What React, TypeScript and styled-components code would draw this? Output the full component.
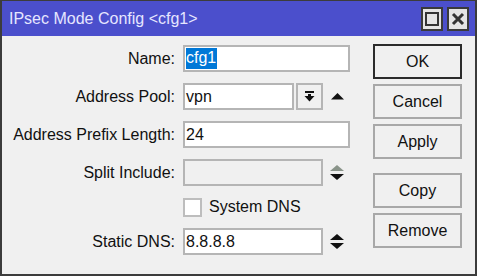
import React from "react";
import styled, { createGlobalStyle } from "styled-components";

const GlobalStyle = createGlobalStyle`
  html, body {
    margin: 0;
    padding: 0;
    background: #f0f0f0;
  }
  body {
    font-family: "Liberation Sans", Arial, sans-serif;
  }
`;

const Window = styled.div`
  box-sizing: border-box;
  width: 477px;
  height: 276px;
  display: flex;
  flex-direction: column;
  background: #f0f0f0;
  border: 2px solid #3c3c3c;
  border-top-width: 1px;
`;

const TitleBar = styled.div`
  height: 35px;
  display: flex;
  align-items: center;
  justify-content: space-between;
  padding: 0 6px 0 7px;
  background: #4b4fcc;
  color: #e6e6ff;
  font-size: 16px;
`;

const TitleButtons = styled.div`
  display: flex;
  gap: 4px;
`;

const TitleButton = styled.div`
  box-sizing: border-box;
  width: 22px;
  height: 24px;
  display: flex;
  align-items: center;
  justify-content: center;
  background: #e4e4e4;
  border: 2px solid #3a3a3a;
`;

const Body = styled.div`
  flex: 1;
  display: flex;
  justify-content: space-between;
  padding: 8px 13px 0 0;
`;

const Form = styled.div`
  display: flex;
  flex-direction: column;
  gap: 11px;
  padding-top: 1px;
`;

const Row = styled.div<{ $short?: boolean }>`
  display: flex;
  align-items: center;
  height: ${(p) => (p.$short ? "20px" : "27px")};
`;

const Label = styled.div`
  width: 173px;
  padding-right: 8px;
  text-align: right;
  font-size: 16px;
  color: #111;
  white-space: nowrap;
`;

const Field = styled.div<{ $width: number; $disabled?: boolean }>`
  box-sizing: border-box;
  width: ${(p) => p.$width}px;
  height: 27px;
  display: flex;
  align-items: center;
  padding-left: 1px;
  background: ${(p) => (p.$disabled ? "#f0f0f0" : "#ffffff")};
  border: 2px solid #b5b5b5;
  font-size: 16px;
  color: #111;
`;

const Selected = styled.span`
  background: #0078d7;
  color: #ffffff;
  padding: 1px 1px 2px 0;
`;

const DropButton = styled.div`
  box-sizing: border-box;
  width: 27px;
  height: 27px;
  margin-left: 2px;
  display: flex;
  align-items: center;
  justify-content: center;
  background: #f0f0f0;
  border: 2px solid #b5b5b5;
`;

const Arrows = styled.div`
  width: 14px;
  margin-left: 7px;
  display: flex;
  justify-content: center;
`;

const CheckRow = styled.label`
  display: flex;
  align-items: center;
  gap: 7px;
  font-size: 16px;
  color: #111;
`;

const CheckBox = styled.span`
  box-sizing: border-box;
  width: 19px;
  height: 19px;
  background: #ffffff;
  border: 2px solid #bdbdbd;
`;

const Buttons = styled.div`
  display: flex;
  flex-direction: column;
  gap: 5px;
`;

const Button = styled.div<{ $primary?: boolean; $spaced?: boolean }>`
  box-sizing: border-box;
  width: 89px;
  height: 35px;
  display: flex;
  align-items: center;
  justify-content: center;
  margin-top: ${(p) => (p.$spaced ? "9px" : "0")};
  background: #f0f0f0;
  border: 2px solid ${(p) => (p.$primary ? "#2b2b2b" : "#a8a8a8")};
  font-size: 16px;
  color: #111;
`;

const UpDown = ({ topColor }: { topColor: string }) => (
  <svg width="14" height="16" viewBox="0 0 14 16">
    <polygon points="7,0 14,6 0,6" fill={topColor} />
    <polygon points="0,9 14,9 7,15" fill="#111" />
  </svg>
);

export default function App() {
  return (
    <>
      <GlobalStyle />
      <Window>
        <TitleBar>
          <span>IPsec Mode Config &lt;cfg1&gt;</span>
          <TitleButtons>
            <TitleButton>
              <svg width="14" height="14" viewBox="0 0 14 14">
                <rect x="1" y="1" width="12" height="12" fill="none" stroke="#333" strokeWidth="2" />
              </svg>
            </TitleButton>
            <TitleButton>
              <svg width="14" height="14" viewBox="0 0 14 14">
                <path d="M2 2 L12 12 M12 2 L2 12" stroke="#333" strokeWidth="3" />
              </svg>
            </TitleButton>
          </TitleButtons>
        </TitleBar>
        <Body>
          <Form>
            <Row>
              <Label>Name:</Label>
              <Field $width={167}>
                <Selected>cfg1</Selected>
              </Field>
            </Row>
            <Row>
              <Label>Address Pool:</Label>
              <Field $width={111}>vpn</Field>
              <DropButton>
                <svg width="11" height="11" viewBox="0 0 11 11">
                  <rect x="1" y="0" width="9" height="2" fill="#111" />
                  <rect x="4" y="3" width="3" height="3" fill="#111" />
                  <polygon points="0.5,5 10.5,5 5.5,10.5" fill="#111" />
                </svg>
              </DropButton>
              <Arrows>
                <svg width="13" height="7" viewBox="0 0 13 7">
                  <polygon points="6.5,0 13,6.5 0,6.5" fill="#111" />
                </svg>
              </Arrows>
            </Row>
            <Row>
              <Label>Address Prefix Length:</Label>
              <Field $width={167}>24</Field>
            </Row>
            <Row>
              <Label>Split Include:</Label>
              <Field $width={140} $disabled />
              <Arrows>
                <UpDown topColor="#8a948a" />
              </Arrows>
            </Row>
            <Row $short>
              <Label />
              <CheckRow>
                <CheckBox />
                System DNS
              </CheckRow>
            </Row>
            <Row>
              <Label>Static DNS:</Label>
              <Field $width={140}>8.8.8.8</Field>
              <Arrows>
                <UpDown topColor="#111" />
              </Arrows>
            </Row>
          </Form>
          <Buttons>
            <Button $primary>OK</Button>
            <Button>Cancel</Button>
            <Button>Apply</Button>
            <Button $spaced>Copy</Button>
            <Button>Remove</Button>
          </Buttons>
        </Body>
      </Window>
    </>
  );
}
